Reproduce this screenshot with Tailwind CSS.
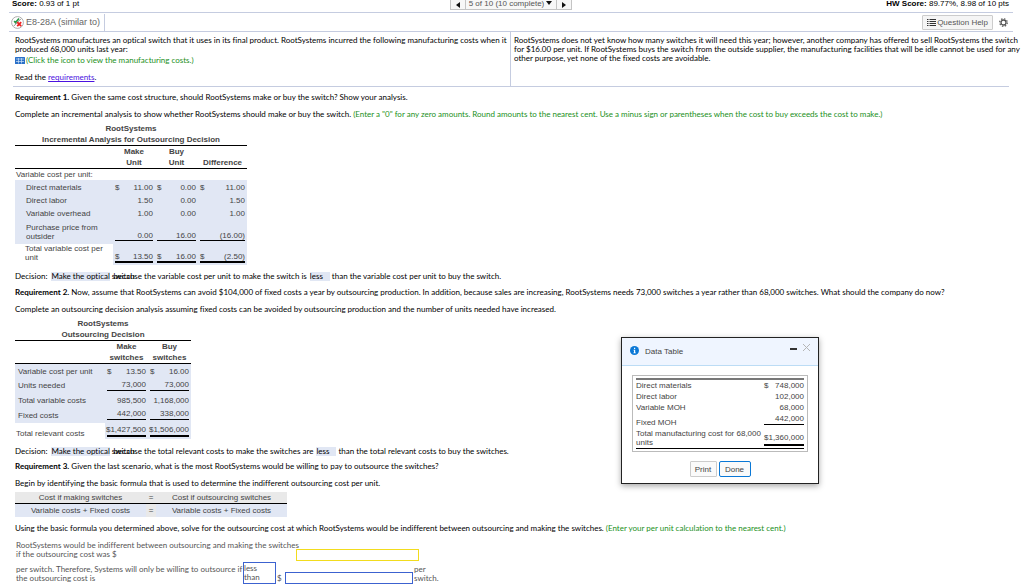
<!DOCTYPE html>
<html lang="en">
<head>
  <meta charset="UTF-8" />
  <meta name="viewport" content="width=device-width, initial-scale=1.0" />
  <title>E8-28A (similar to)</title>
  <script src="https://cdn.jsdelivr.net/npm/@tailwindcss/browser@4"></script>
</head>
<body class="relative bg-white text-black text-[8px] leading-[9px] font-['Liberation_Sans',Arial,sans-serif] overflow-x-hidden">
  <!-- Score bar -->
  <header class="flex justify-between h-[13px] ml-[9px] mr-[11px] border-b border-[#c5cce0] overflow-hidden">
    <p class="flex-1 -mt-px pl-[3px]"><b>Score:</b> 0.93 of 1 pt</p>
    <nav class="flex h-[10px] border border-t-0 border-[#c4c4c4] bg-[#f7f7f7] text-[#555]">
      <button aria-label="Previous question" class="w-[14px] flex items-center justify-center"><svg class="w-1 h-[6px]" viewBox="0 0 4 6"><path d="M4 0v6L0 3z" fill="#111" /></svg></button>
      <button class="w-[92px] border-x border-[#c4c4c4] flex items-center justify-center gap-[2px] pb-[2px] -mt-px whitespace-nowrap">5 of 10 (10 complete) <svg class="w-[6px] h-1" viewBox="0 0 6 4"><path d="M0 0h6L3 4z" fill="#111" /></svg></button>
      <button aria-label="Next question" class="w-[14px] flex items-center justify-center"><svg class="w-1 h-[6px]" viewBox="0 0 4 6"><path d="M0 0v6l4-3z" fill="#111" /></svg></button>
    </nav>
    <p class="flex-1 -mt-px pr-1 text-right"><b>HW Score:</b> 89.77%, 8.98 of 10 pts</p>
  </header>

  <!-- Question title -->
  <div class="flex items-center justify-between h-[19px] ml-[9px] mr-[11px] border-b border-[#c5cce0]">
    <div class="flex items-center gap-[2px] h-[17px] pr-1 border-r border-[#c5cce0] text-[#666]">
      <svg class="w-[13px] h-[13px] ml-[2px]" viewBox="0 0 13 13" fill="none">
        <circle cx="6.500" cy="6.500" r="5.900" fill="#fff" stroke="#999" stroke-width=".8" />
        <path d="M3.200 5l1.300 1.600L8 2.500" stroke="#2a9a4a" stroke-width="1.700" />
        <path d="M2.800 10L10 2.800" stroke="#777" stroke-width=".8" />
        <path d="M6.200 6.200l4 4M10.200 6.200l-4 4" stroke="#e22" stroke-width="1.800" />
      </svg>
      <h1 class="text-[9px]">E8-28A (similar to)</h1>
    </div>
    <div class="flex items-center gap-[6px] pr-[5px]">
      <button class="flex items-center gap-px h-[15px] w-[71px] justify-center border border-[#ccc] rounded-[1px] bg-[#f5f5f5] text-[#555] whitespace-nowrap">
        <svg class="w-[9px] h-[7px]" viewBox="0 0 9 7" fill="#333"><path d="M0 0h1.500v1H0zM2.500 0H9v1H2.500zM0 2h1.500v1H0zM2.500 2H9v1H2.500zM0 4h1.500v1H0zM2.500 4H9v1H2.500zM0 6h1.500v1H0zM2.500 6H9v1H2.500z" /></svg>
        Question Help
      </button>
      <button aria-label="Settings"><svg class="w-[9px] h-[9px]" viewBox="0 0 9 9" fill="none" stroke="#555"><circle cx="4.500" cy="4.500" r="2.500" stroke-width="1.300" /><circle cx="4.500" cy="4.500" r="3.800" stroke-width="1.200" stroke-dasharray="1.500 1.485" /></svg></button>
    </div>
  </div>

  <!-- Problem statement -->
  <section class="grid grid-cols-2 h-[55px] ml-[13px] mr-[15px] border-b border-[#c5cce0] whitespace-nowrap font-[Lato,Arial,sans-serif] [font-variant-ligatures:none]">
    <div class="pl-[2px] pt-1">
      <p>RootSystems manufactures an optical switch that it uses in its final product. RootSystems incurred the following manufacturing costs when it<br />produced 68,000 units last year:</p>
      <button class="flex items-center h-[10px] mt-px text-[#1a8f1a]">
        <svg class="w-[10px] h-[7px] mr-px" viewBox="0 0 10 7"><rect width="10" height="7" rx=".5" fill="#2a70c8" /><path d="M1 2h8M1 4.500h8M3.500 1v5.500M6.500 1v5.500" stroke="#cfe2f8" stroke-width=".7" /></svg>
        (Click the icon to view the manufacturing costs.)
      </button>
      <p class="mt-2">Read the <a href="#" class="underline text-[#4a12e0]">requirements</a>.</p>
    </div>
    <div class="pl-[3px] pt-1 -ml-px border-l border-[#c5cce0]">
      <p>RootSystems does not yet know how many switches it will need this year; however, another company has offered to sell RootSystems the switch<br />for $16.00 per unit. If RootSystems buys the switch from the outside supplier, the manufacturing facilities that will be idle cannot be used for any<br />other purpose, yet none of the fixed costs are avoidable.</p>
    </div>
  </section>

  <main class="pl-[15px] pt-[6px] whitespace-nowrap font-[Lato,Arial,sans-serif] [font-variant-ligatures:none]">
    <!-- Requirement 1 -->
    <p><b>Requirement 1.</b> Given the same cost structure, should RootSystems make or buy the switch? Show your analysis.</p>
    <p class="mt-2">Complete an incremental analysis to show whether RootSystems should make or buy the switch. <span class="text-[#1a8f1a]">(Enter a "0" for any zero amounts. Round amounts to the nearest cent. Use a minus sign or parentheses when the cost to buy exceeds the cost to make.)</span></p>

    <table class="mt-1 w-[232px] table-fixed border-separate border-spacing-0 text-[#444] font-['Liberation_Sans',Arial,sans-serif]">
      <caption class="font-bold leading-[11px]">RootSystems<br />Incremental Analysis for Outsourcing Decision</caption>
      <colgroup><col class="w-[98px]" /><col class="w-[42px]" /><col class="w-[43px]" /><col class="w-[49px]" /></colgroup>
      <thead class="leading-[11px]">
        <tr>
          <th class="p-0 border-y border-black"></th>
          <th class="p-0 border-y border-black">Make<br />Unit</th>
          <th class="p-0 border-y border-black">Buy<br />Unit</th>
          <th class="p-0 border-y border-black align-bottom">Difference</th>
        </tr>
      </thead>
      <tbody>
        <tr class="h-[11px]"><td colspan="4" class="p-0 pl-px">Variable cost per unit:</td></tr>
        <tr class="h-[14px] bg-[#e1e7f4]">
          <td class="p-0 pl-[11px]">Direct materials</td>
          <td class="p-0 px-[2px]"><div class="flex justify-between"><span>$</span>11.00</div></td>
          <td class="p-0 px-[2px]"><div class="flex justify-between"><span>$</span>0.00</div></td>
          <td class="p-0 px-[2px]"><div class="flex justify-between"><span>$</span>11.00</div></td>
        </tr>
        <tr class="h-[13px] bg-[#e1e7f4] text-right">
          <td class="p-0 pl-[11px] text-left">Direct labor</td>
          <td class="p-0 px-[2px]">1.50</td>
          <td class="p-0 px-[2px]">0.00</td>
          <td class="p-0 px-[2px]">1.50</td>
        </tr>
        <tr class="h-[13px] bg-[#e1e7f4] text-right">
          <td class="p-0 pl-[11px] text-left">Variable overhead</td>
          <td class="p-0 px-[2px]">1.00</td>
          <td class="p-0 px-[2px]">0.00</td>
          <td class="p-0 px-[2px]">1.00</td>
        </tr>
        <tr class="h-[24px] bg-[#e1e7f4] text-right">
          <td class="p-0 pl-[11px] text-left">Purchase price from<br />outsider</td>
          <td class="p-0 px-[2px] pb-[3px] align-bottom"><div class="border-b border-black">0.00</div></td>
          <td class="p-0 px-[2px] pb-[3px] align-bottom"><div class="border-b border-black">16.00</div></td>
          <td class="p-0 px-[2px] pb-[3px] align-bottom"><div class="border-b border-black">(16.00)</div></td>
        </tr>
        <tr class="h-[21px]">
          <td class="p-0 pl-[10px] align-top">Total variable cost per<br />unit</td>
          <td class="p-0 px-[2px] pb-[2px] align-bottom bg-[#e1e7f4]"><div class="flex justify-between border-b-2 border-black"><span>$</span>13.50</div></td>
          <td class="p-0 px-[2px] pb-[2px] align-bottom bg-[#e1e7f4]"><div class="flex justify-between border-b-2 border-black"><span>$</span>16.00</div></td>
          <td class="p-0 px-[2px] pb-[2px] align-bottom bg-[#e1e7f4]"><div class="flex justify-between border-b-2 border-black"><span>$</span>(2.50)</div></td>
        </tr>
      </tbody>
    </table>

    <p class="flex mt-[7px]">Decision:<span class="w-[59px] ml-1 mr-[3px] bg-[#e1e7f4]">Make the optical switch</span>because the variable cost per unit to make the switch is<span class="w-[20px] ml-[3px] mr-[2px] bg-[#e1e7f4]">less</span>than the variable cost per unit to buy the switch.</p>

    <!-- Requirement 2 -->
    <p class="mt-[7px]"><b>Requirement 2.</b> Now, assume that RootSystems can avoid $104,000 of fixed costs a year by outsourcing production. In addition, because sales are increasing, RootSystems needs 73,000 switches a year rather than 68,000 switches. What should the company do now?</p>
    <p class="mt-2">Complete an outsourcing decision analysis assuming fixed costs can be avoided by outsourcing production and the number of units needed have increased.</p>

    <table class="mt-1 w-[176px] table-fixed border-separate border-spacing-0 text-[#444] font-['Liberation_Sans',Arial,sans-serif]">
      <caption class="font-bold leading-[11px]">RootSystems<br />Outsourcing Decision</caption>
      <colgroup><col class="w-[90px]" /><col class="w-[43px]" /><col class="w-[43px]" /></colgroup>
      <thead class="leading-[11px]">
        <tr>
          <th class="p-0 border-y border-black"></th>
          <th class="p-0 border-y border-black">Make<br />switches</th>
          <th class="p-0 border-y border-black">Buy<br />switches</th>
        </tr>
      </thead>
      <tbody class="text-right">
        <tr class="h-[14px] bg-[#e1e7f4]">
          <td class="p-0 pl-[3px] text-left">Variable cost per unit</td>
          <td class="p-0 px-[2px]"><div class="flex justify-between"><span>$</span>13.50</div></td>
          <td class="p-0 px-[2px]"><div class="flex justify-between"><span>$</span>16.00</div></td>
        </tr>
        <tr class="h-[15px] bg-[#e1e7f4]">
          <td class="p-0 pl-[3px] text-left">Units needed</td>
          <td class="p-0 px-[2px] pb-[2px] align-bottom"><div class="pb-px border-b border-black">73,000</div></td>
          <td class="p-0 px-[2px] pb-[2px] align-bottom"><div class="pb-px border-b border-black">73,000</div></td>
        </tr>
        <tr class="h-[14px] bg-[#e1e7f4]">
          <td class="p-0 pl-[3px] text-left">Total variable costs</td>
          <td class="p-0 px-[2px]">985,500</td>
          <td class="p-0 px-[2px]">1,168,000</td>
        </tr>
        <tr class="h-[16px] bg-[#e1e7f4]">
          <td class="p-0 pl-[3px] pt-px text-left">Fixed costs</td>
          <td class="p-0 px-[2px] pb-[3px] align-bottom"><div class="pb-px border-b border-black">442,000</div></td>
          <td class="p-0 px-[2px] pb-[3px] align-bottom"><div class="pb-px border-b border-black">338,000</div></td>
        </tr>
        <tr class="h-[16px]">
          <td class="p-0 pl-px pt-1 text-left">Total relevant costs</td>
          <td class="p-0 px-[2px] pb-[2px] align-bottom bg-[#e1e7f4]"><div class="flex justify-end pb-px border-b-2 border-black">$1,427,500</div></td>
          <td class="p-0 px-[2px] pb-[2px] align-bottom bg-[#e1e7f4]"><div class="flex justify-end pb-px border-b-2 border-black">$1,506,000</div></td>
        </tr>
      </tbody>
    </table>

    <p class="flex mt-2">Decision:<span class="w-[59px] ml-1 mr-[3px] bg-[#e1e7f4]">Make the optical switch</span>because the total relevant costs to make the switches are<span class="w-[20px] ml-[3px] mr-[2px] bg-[#e1e7f4]">less</span>than the total relevant costs to buy the switches.</p>

    <!-- Requirement 3 -->
    <p class="mt-[6px]"><b>Requirement 3.</b> Given the last scenario, what is the most RootSystems would be willing to pay to outsource the switches?</p>
    <p class="mt-2">Begin by identifying the basic formula that is used to determine the indifferent outsourcing cost per unit.</p>

    <table class="mt-1 w-[272px] table-fixed border-separate border-spacing-0 text-center text-[#444] font-['Liberation_Sans',Arial,sans-serif]">
      <colgroup><col class="w-[131px]" /><col class="w-[10px]" /><col class="w-[131px]" /></colgroup>
      <tr class="h-[12px] bg-[#e9e9e9]">
        <td class="p-0 border-b border-black">Cost if making switches</td>
        <td class="p-0 border-b border-black">=</td>
        <td class="p-0 border-b border-black">Cost if outsourcing switches</td>
      </tr>
      <tr class="h-[13px] bg-[#e1e7f4]">
        <td class="p-0">Variable costs + Fixed costs</td>
        <td class="p-0 bg-[#e9e9e9]">=</td>
        <td class="p-0">Variable costs + Fixed costs</td>
      </tr>
    </table>

    <p class="mt-[7px]">Using the basic formula you determined above, solve for the outsourcing cost at which RootSystems would be indifferent between outsourcing and making the switches. <span class="text-[#1a8f1a]">(Enter your per unit calculation to the nearest cent.)</span></p>

    <form class="mt-2 pl-px text-[#555]">
      <div class="flex">
        <label for="costPerSwitch" class="w-[280px]">RootSystems would be indifferent between outsourcing and making the switches<br />if the outsourcing cost was $</label>
        <input type="text" id="costPerSwitch" class="w-[123px] h-[12px] mt-2 border border-[#f2dc1e]" />
      </div>
      <div class="flex mt-px">
        <label for="willingCost" class="w-[227px] pt-[3px]">per switch. Therefore, Systems will only be willing to outsource if<br />the outsourcing cost is</label>
        <button type="button" aria-haspopup="listbox" class="w-[33px] h-[22px] border border-[#3c62d0] text-left leading-[9px]">less<br />than</button>
        <span class="w-[9px] pt-3 pl-px">$</span>
        <input type="text" id="willingCost" class="w-[128px] h-[12px] mt-[10px] border border-[#3c62d0]" />
        <span class="pt-[3px] pl-px">per<br />switch.</span>
      </div>
    </form>
  </main>

  <!-- Data table window -->
  <div role="dialog" aria-labelledby="dataTableTitle" class="absolute left-[621px] top-[337px] w-[198px] border border-[#222] bg-white text-[#444] shadow-[0_2px_6px_rgba(0,0,0,0.35)]">
    <div class="flex h-[28px] px-2 pt-2 border-b border-[#bcdcf5] bg-[#eff5ff]">
      <svg class="w-[9px] h-[9px]" viewBox="0 0 9 9"><circle cx="4.500" cy="4.500" r="4.500" fill="#0a78d6" /><path d="M4 1.700h1.200v1.200H4zM3.500 3.700h1.700v2.800h.6v.7H3.400v-.7H4V4.400h-.5z" fill="#fff" /></svg>
      <h2 id="dataTableTitle" class="flex-1 pl-[6px] pt-px">Data Table</h2>
      <button aria-label="Minimize" class="w-[7px] h-[2px] mt-[2px] bg-[#333]"></button>
      <button aria-label="Close" class="w-[7px] h-[7px] ml-[6px] -mt-[2px]"><svg viewBox="0 0 7 7" stroke="#b5b5b5"><path d="M0 0l7 7M7 0L0 7" /></svg></button>
    </div>
    <div class="mx-[10px] mt-[9px] px-[3px] py-[2px] border border-[#bbb]">
      <table class="w-full table-fixed border-separate border-spacing-0 border-t-2 border-t-[#777] border-b border-b-black">
        <colgroup><col /><col class="w-[40px]" /></colgroup>
        <tr class="h-[11px]"><td class="p-0">Direct materials</td><td class="p-0"><div class="flex justify-between"><span>$</span>748,000</div></td></tr>
        <tr class="h-[11px]"><td class="p-0">Direct labor</td><td class="p-0 text-right">102,000</td></tr>
        <tr class="h-[11px]"><td class="p-0">Variable MOH</td><td class="p-0 text-right">68,000</td></tr>
        <tr class="h-[14px]"><td class="p-0 align-bottom">Fixed MOH</td><td class="p-0 pb-px align-top text-right"><div class="pt-px pb-px border-b border-black">442,000</div></td></tr>
        <tr class="h-[21px]"><td class="p-0 whitespace-nowrap">Total manufacturing cost for 68,000<br />units</td><td class="p-0 pb-[2px] align-bottom text-right"><div class="pb-[2px] border-b-2 border-black">$1,360,000</div></td></tr>
      </table>
    </div>
    <div class="flex justify-center gap-[2px] mt-[9px] mb-[6px]">
      <button class="w-[27px] h-[16px] border border-[#ccc] rounded-[1px] bg-[#fafafa]">Print</button>
      <button class="w-[32px] h-[16px] border border-[#0a78d6] rounded-[2px] bg-[#fafafa]">Done</button>
    </div>
  </div>
</body>
</html>
